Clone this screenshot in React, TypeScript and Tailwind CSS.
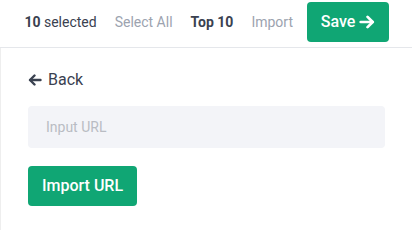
function Arrow({ dir, className }: { dir: 'left' | 'right'; className?: string }) {
  return (
    <svg viewBox="0 0 14 12" className={className} fill="none" stroke="currentColor" strokeWidth={2.4} strokeLinecap="round" strokeLinejoin="round">
      {dir === 'left' ? (
        <>
          <path d="M6.5 1.5 2 6l4.5 4.5" />
          <path d="M2.2 6H12.5" />
        </>
      ) : (
        <>
          <path d="M7.5 1.5 12 6l-4.5 4.5" />
          <path d="M1.5 6H11.8" />
        </>
      )}
    </svg>
  );
}

export default function App() {
  return (
    <div className="w-[412px] h-[230px] bg-white overflow-hidden" style={{ fontFamily: 'Roboto, "Liberation Sans", sans-serif' }}>
      <header className="h-[48px] flex items-start justify-end pr-[23px] pt-[2px] border-b border-[#e5e7eb]">
        <div className="h-[40px] flex items-center text-[14px] gap-[18px] mr-[14px]">
          <span className="text-[#3a4150]"><b className="font-bold">10</b> selected</span>
          <span className="text-[#9ca3af]">Select All</span>
          <span className="text-[#3a4150] font-bold">Top 10</span>
          <span className="text-[#9ca3af]">Import</span>
        </div>
        <button className="h-[40px] w-[82px] rounded-[4px] bg-[#10a674] text-white text-[16px] font-medium flex items-center justify-center gap-[4px]">
          Save
          <Arrow dir="right" className="w-[16px] h-[14px]" />
        </button>
      </header>

      <main className="border-l border-[#eeeeee] h-[182px] pl-[27px] pr-[27px]">
        <div className="flex items-center gap-[6px] pt-[21px] h-[42px] text-[#3a4150] text-[16px]">
          <Arrow dir="left" className="w-[14px] h-[12px]" />
          <span>Back</span>
        </div>
        <input
          className="mt-[16px] w-[357px] h-[42px] rounded-[4px] bg-[#f3f4f8] pl-[18px] text-[14px] outline-none placeholder:text-[#b9bcc3]"
          placeholder="Input URL"
        />
        <button className="mt-[18px] block h-[40px] px-[14px] rounded-[4px] bg-[#10a674] text-white text-[16px] font-medium">
          Import URL
        </button>
      </main>
    </div>
  );
}
